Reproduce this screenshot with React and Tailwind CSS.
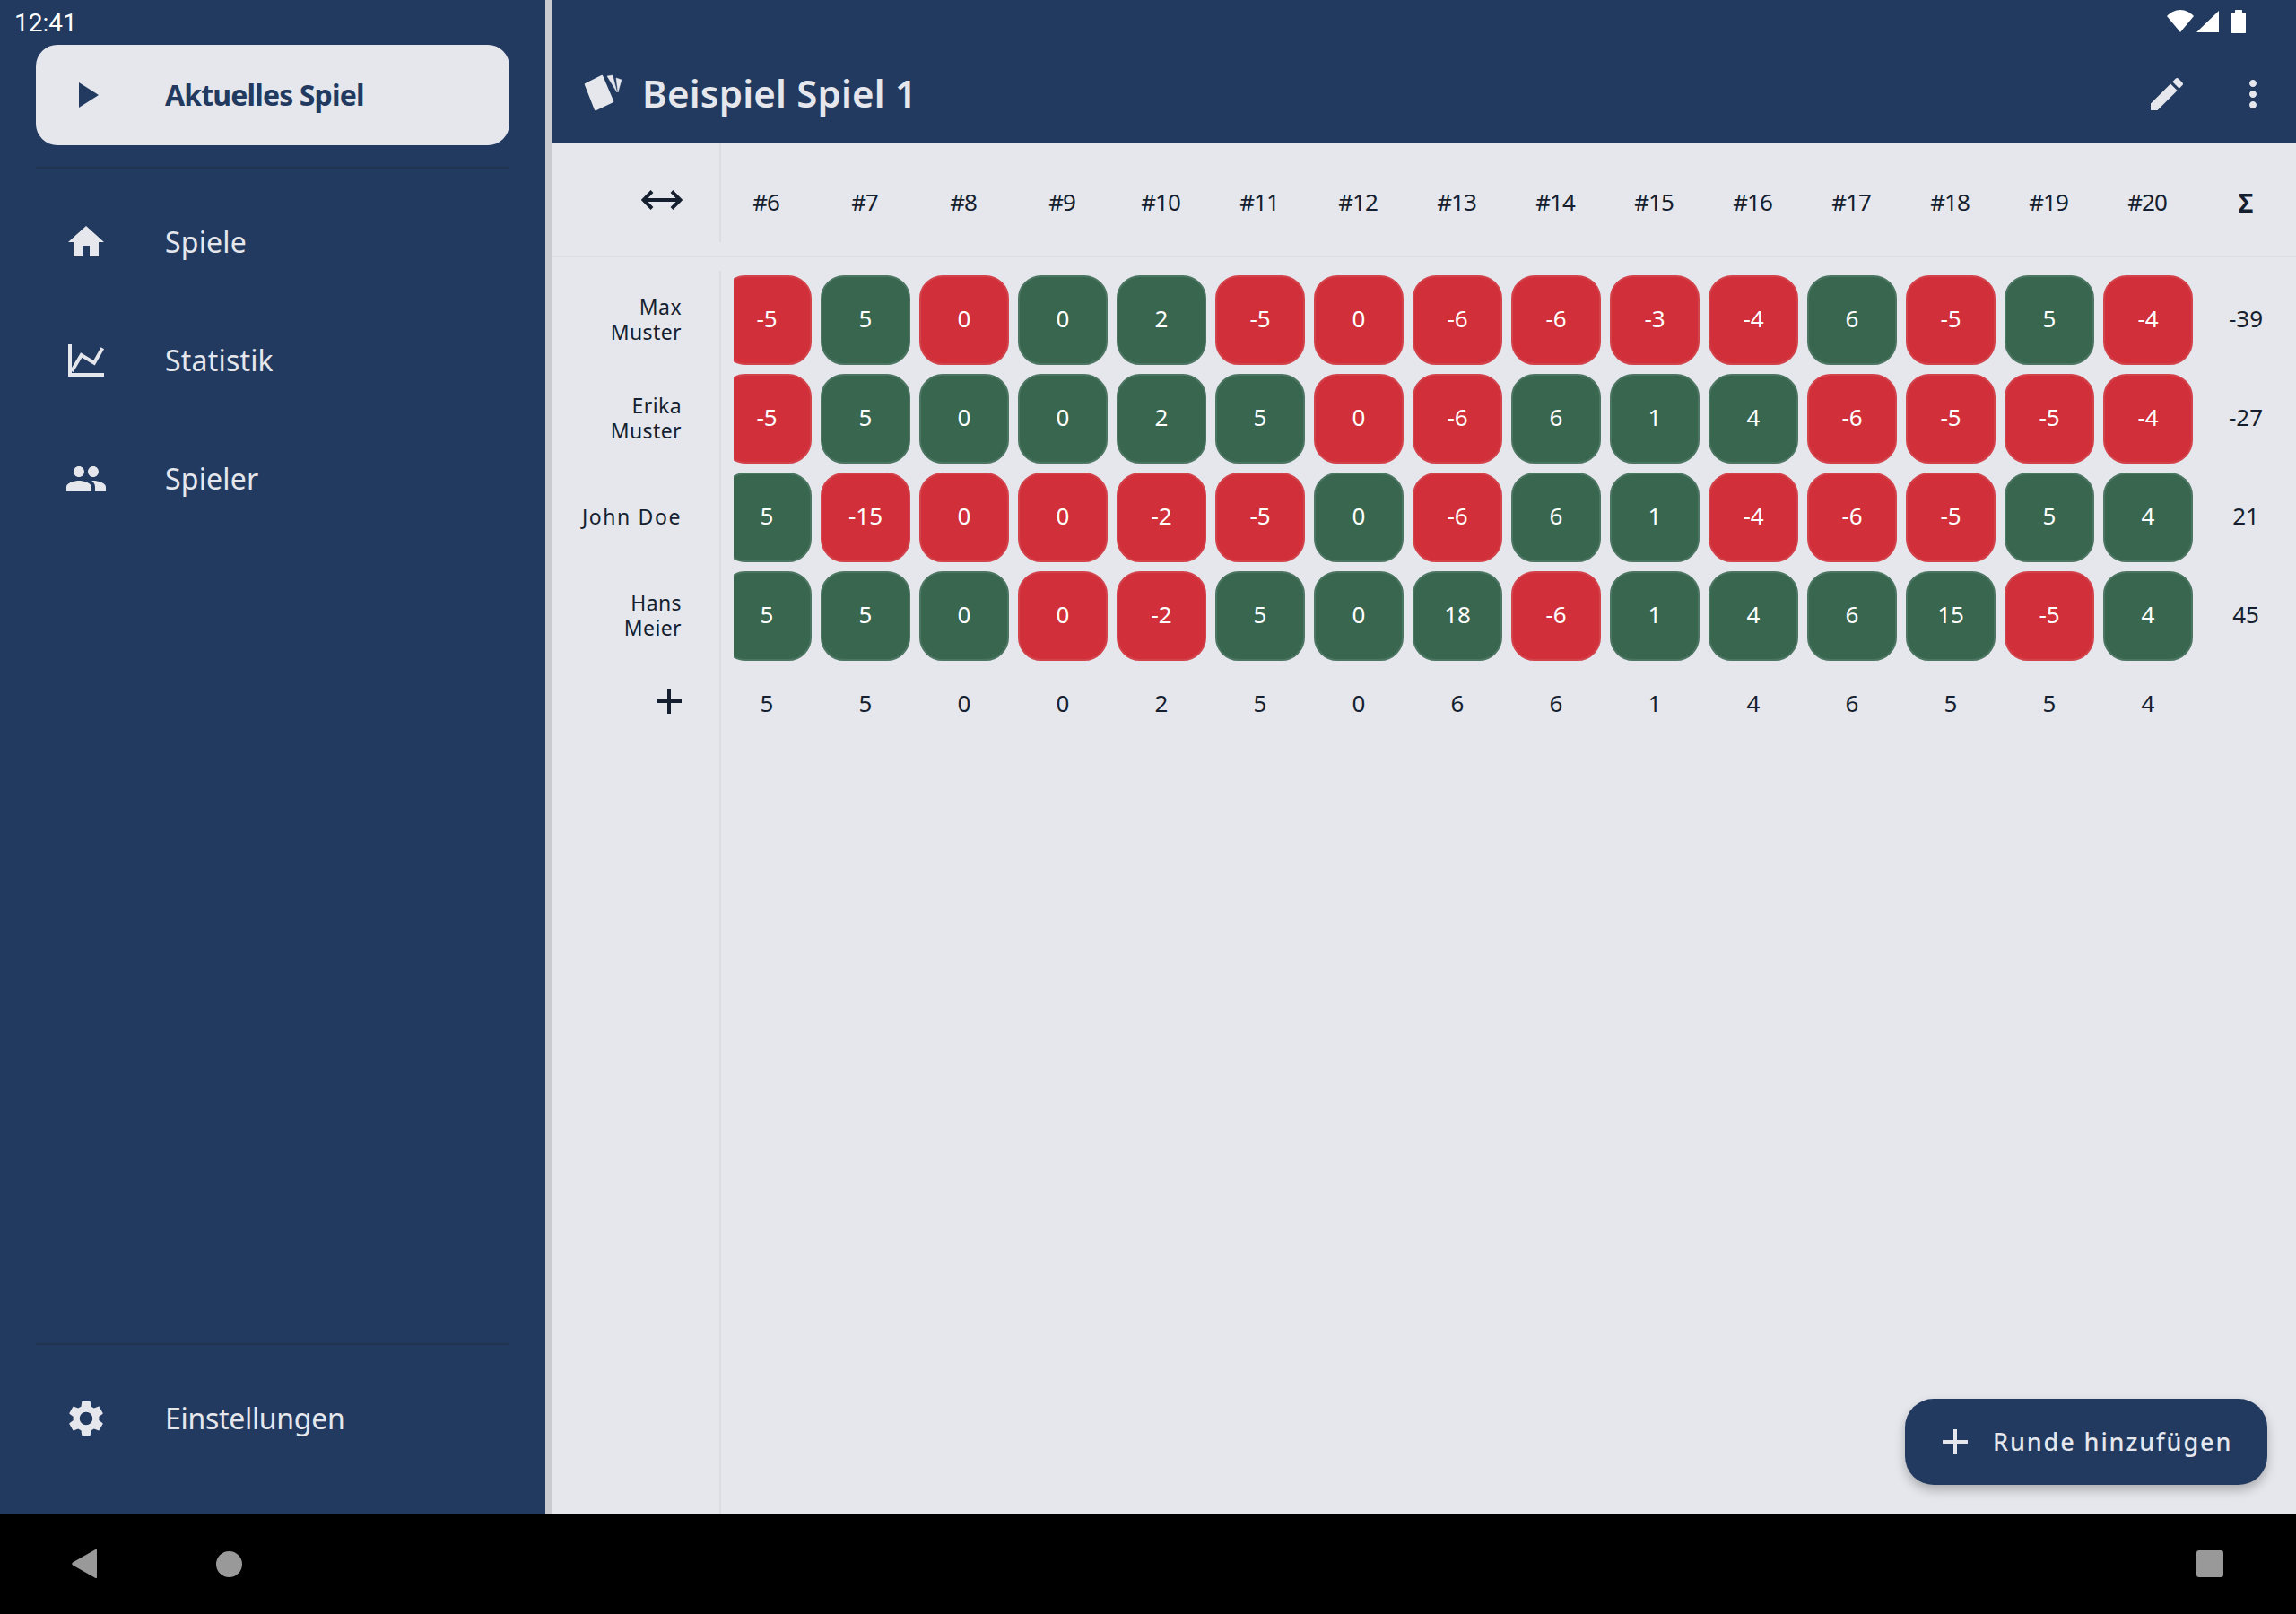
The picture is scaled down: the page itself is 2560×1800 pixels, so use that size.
const ROWS = [
  { name: ["Max", "Muster"], v: ["-5", "5", "0", "0", "2", "-5", "0", "-6", "-6", "-3", "-4", "6", "-5", "5", "-4"], c: "rgrggrrrrrrgrgr", sum: "-39", track: "tracking-[0.4px]" },
  { name: ["Erika", "Muster"], v: ["-5", "5", "0", "0", "2", "5", "0", "-6", "6", "1", "4", "-6", "-5", "-5", "-4"], c: "rgggggrrgggrrrr", sum: "-27", track: "tracking-[0.4px]" },
  { name: ["John Doe"], v: ["5", "-15", "0", "0", "-2", "-5", "0", "-6", "6", "1", "-4", "-6", "-5", "5", "4"], c: "grrrrrgrggrrrgg", sum: "21", track: "tracking-[1.6px]" },
  { name: ["Hans", "Meier"], v: ["5", "5", "0", "0", "-2", "5", "0", "18", "-6", "1", "4", "6", "15", "-5", "4"], c: "gggrrgggrggggrg", sum: "45", track: "tracking-[0.4px]" },
];
const HEAD = ["#6", "#7", "#8", "#9", "#10", "#11", "#12", "#13", "#14", "#15", "#16", "#17", "#18", "#19", "#20"];
const BOTTOM = ["5", "5", "0", "0", "2", "5", "0", "6", "6", "1", "4", "6", "5", "5", "4"];

function Icon({ d, className = "" }) {
  return (
    <svg viewBox="0 0 24 24" className={`h-[48px] w-[48px] shrink-0 fill-current ${className}`}>
      <path d={d} />
    </svg>
  );
}

const HOME = "M10 20v-6h4v6h5v-8h3L12 3 2 12h3v8z";
const PEOPLE = "M16 11c1.66 0 2.99-1.34 2.99-3S17.66 5 16 5c-1.66 0-3 1.34-3 3s1.34 3 3 3zm-8 0c1.66 0 2.99-1.34 2.99-3S9.66 5 8 5C6.34 5 5 6.34 5 8s1.34 3 3 3zm0 2c-2.33 0-7 1.17-7 3.5V19h14v-2.5c0-2.33-4.67-3.5-7-3.5zm8 0c-.29 0-.62.02-.97.05 1.16.84 1.97 1.97 1.97 3.45V19h6v-2.5c0-2.33-4.67-3.5-7-3.5z";
const GEAR = "M19.14 12.94c.04-.3.06-.61.06-.94 0-.32-.02-.64-.07-.94l2.03-1.58c.18-.14.23-.41.12-.61l-1.92-3.32c-.12-.22-.37-.29-.59-.22l-2.39.96c-.5-.38-1.03-.7-1.62-.94l-.36-2.54c-.04-.24-.24-.41-.48-.41h-3.84c-.24 0-.43.17-.47.41l-.36 2.54c-.59.24-1.13.57-1.62.94l-2.39-.96c-.22-.08-.47 0-.59.22L2.74 8.87c-.12.21-.08.47.12.61l2.03 1.58c-.05.3-.09.63-.09.94s.02.64.07.94l-2.03 1.58c-.18.14-.23.41-.12.61l1.92 3.32c.12.22.37.29.59.22l2.39-.96c.5.38 1.03.7 1.62.94l.36 2.54c.05.24.24.41.48.41h3.84c.24 0 .44-.17.47-.41l.36-2.54c.59-.24 1.13-.56 1.62-.94l2.39.96c.22.08.47 0 .59-.22l1.92-3.32c.12-.22.07-.47-.12-.61l-2.01-1.58zM12 15.6c-1.98 0-3.6-1.62-3.6-3.6s1.62-3.6 3.6-3.6 3.6 1.62 3.6 3.6-1.62 3.6-3.6 3.6z";
const PENCIL = "M3 17.25V21h3.75L17.81 9.94l-3.75-3.75L3 17.25zM20.71 7.04c.39-.39.39-1.02 0-1.41l-2.34-2.34c-.39-.39-1.02-.39-1.41 0l-1.83 1.83 3.75 3.75 1.83-1.83z";
const DOTS = "M12 8c1.1 0 2-.9 2-2s-.9-2-2-2-2 .9-2 2 .9 2 2 2zm0 2c-1.1 0-2 .9-2 2s.9 2 2 2 2-.9 2-2-.9-2-2-2zm0 6c-1.1 0-2 .9-2 2s.9 2 2 2 2-.9 2-2-.9-2-2-2z";

function ChartIcon() {
  return (
    <svg viewBox="0 0 48 48" className="h-[48px] w-[48px] shrink-0 fill-none stroke-current" strokeWidth="4">
      <path d="M6 6v34h38" />
      <path d="M8 36 18.7 18l14.3 8.7 9.3-16.4" />
    </svg>
  );
}

function NavItem({ icon, label, track = "tracking-[0.2px]" }) {
  return (
    <div className="flex h-[132px] items-center pl-[72px] text-[#e5e7ec]">
      {icon}
      <span className={`ml-[64px] text-[32px] ${track}`}>{label}</span>
    </div>
  );
}

function Cell({ value, kind, first }) {
  return (
    <div
      className={`flex h-[100px] w-[100px] shrink-0 items-center justify-center rounded-[26px] border-2 pb-[3px] text-[26px] text-white ${
        kind === "r" ? "border-[#d3434c] bg-[#d12f39]" : "border-[#4c7562] bg-[#38664f]"
      } ${first ? "ml-[-13px]" : "ml-[10px]"}`}
    >
      {value}
    </div>
  );
}

export default function App() {
  return (
    <div className="relative flex h-[1800px] w-[2560px] flex-col overflow-hidden font-['Noto_Sans',sans-serif] text-[#161f30]">
      <div className="flex h-[1688px]">
        <aside className="flex w-[608px] shrink-0 flex-col bg-[#223a60]">
          <div className="flex h-[50px] items-center pl-[16px] pt-[1px] font-['Roboto',sans-serif] text-[28px] text-white">12:41</div>
          <div className="mx-[40px] flex h-[112px] items-center rounded-[24px] bg-[#e5e7ec] pl-[32px] text-[#223a60]">
            <Icon d="M8 5v14l11-7z" />
            <span className="ml-[64px] pb-[1px] text-[32px] font-bold tracking-[-0.85px]">Aktuelles Spiel</span>
          </div>
          <div className="mx-[40px] mt-[24px] h-[2px] bg-[#20344f]" />
          <div className="mt-[16px]">
            <NavItem icon={<Icon d={HOME} />} label="Spiele" />
            <NavItem icon={<ChartIcon />} label="Statistik" />
            <NavItem icon={<Icon d={PEOPLE} />} label="Spieler" />
          </div>
          <div className="mx-[40px] mt-auto h-[2px] bg-[#20344f]" />
          <div className="mb-[40px] mt-[16px]">
            <NavItem icon={<Icon d={GEAR} />} label="Einstellungen" track="tracking-[-0.3px]" />
          </div>
        </aside>
        <div className="w-[8px] shrink-0 bg-[#c9cbd0]" />
        <main className="relative flex min-w-0 flex-1 flex-col bg-[#e5e7ec]">
          <header className="relative h-[160px] shrink-0 bg-[#223a60] text-[#e5e7ec]">
            <div className="flex h-[50px] items-start justify-end pr-[52px] pt-[11px] text-white">
              <svg viewBox="0 0 92 26" className="h-[26px] w-[92px] fill-current">
                <path d="M0 7C4 3 9 0 15 0s11 3 15 7L15 25z" />
                <path d="M33 25 58 1v24z" />
                <path d="M73 3h3V1c0-.6.4-1 1-1h6c.6 0 1 .4 1 1v2h3c.6 0 1 .4 1 1v21c0 .6-.4 1-1 1H73c-.6 0-1-.4-1-1V4c0-.6.4-1 1-1z" />
              </svg>
            </div>
            <div className="flex h-[110px] items-center pl-[34px] pr-[24px]">
              <svg viewBox="0 0 44 42" className="mb-[4px] h-[42px] w-[44px] shrink-0 fill-current stroke-current" strokeLinejoin="round">
                <path d="M3 12 21 3l12 28-19 9z" strokeWidth="2.5" />
                <path d="M27 3 33 2 38 21z" strokeWidth="0.5" />
                <path d="M37 5 43 7 39 21z" strokeWidth="0.5" />
              </svg>
              <h1 className="mb-[2px] ml-[22px] text-[42px] font-semibold leading-none tracking-[0.2px]">Beispiel Spiel 1</h1>
              <div className="ml-auto flex items-center gap-[48px]">
                <Icon d={PENCIL} />
                <Icon d={DOTS} />
              </div>
            </div>
          </header>

          <div className="flex h-[127px] shrink-0 border-b-2 border-[#dbdde2]">
            <div className="flex h-[110px] w-[188px] shrink-0 items-center border-r-2 border-[#dbdde2] pl-[99px] pt-[15px]">
              <svg viewBox="0 0 46 28" className="h-[28px] w-[46px] fill-none stroke-[#161f30]" strokeWidth="4">
                <path d="M3 14h40M12 4.5 2.5 14l9.5 9.5M34 4.5l9.5 9.5-9.5 9.5" />
              </svg>
            </div>
            <div className="ml-[-5px] flex h-[125px] items-center pt-[6px]">
              {HEAD.map((h) => (
                <div key={h} className="flex w-[110px] shrink-0 justify-center text-[26px] tracking-[-1px]">{h}</div>
              ))}
              <div className="ml-[6px] flex w-[98px] shrink-0 justify-center text-[28px] font-bold">Σ</div>
            </div>
          </div>

          <div className="flex min-h-0 flex-1 pt-[15px]">
            <div className="flex w-[188px] shrink-0 flex-col border-r-2 border-[#dbdde2] pr-[42px] pt-[5px]">
              {ROWS.map((r) => (
                <div key={r.name[0]} className={`mb-[10px] flex h-[100px] flex-col items-end justify-center pb-[2px] text-right text-[23px] leading-[28px] ${r.track}`}>
                  {r.name.map((n) => <span key={n}>{n}</span>)}
                </div>
              ))}
              <div className="flex h-[70px] items-center justify-end">
                <svg viewBox="0 0 28 28" className="h-[28px] w-[28px] fill-none stroke-[#161f30]" strokeWidth="4">
                  <path d="M14 0v28M0 14h28" />
                </svg>
              </div>
            </div>
            <div className="ml-[14px] w-[1637px] shrink-0 overflow-hidden pt-[5px]">
              {ROWS.map((r) => (
                <div key={r.name[0]} className="mb-[10px] flex">
                  {r.v.map((v, i) => <Cell key={i} value={v} kind={r.c[i]} first={i === 0} />)}
                </div>
              ))}
              <div className="flex h-[78px] items-center pb-[3px]">
                {BOTTOM.map((v, i) => (
                  <div key={i} className={`flex w-[100px] shrink-0 justify-center text-[26px] ${i === 0 ? "ml-[-13px]" : "ml-[10px]"}`}>{v}</div>
                ))}
              </div>
            </div>
            <div className="w-[98px] shrink-0 pt-[5px]">
              {ROWS.map((r) => (
                <div key={r.name[0]} className="mb-[10px] flex h-[100px] items-center justify-center pb-[3px] text-[26px]">{r.sum}</div>
              ))}
            </div>
          </div>

          <button className="absolute bottom-[32px] right-[32px] flex h-[96px] w-[404px] items-center rounded-[32px] bg-[#223a60] pl-[42px] text-[#e5e7ec] shadow-[0_6px_12px_rgba(0,0,0,0.25)]">
            <svg viewBox="0 0 28 28" className="h-[28px] w-[28px] shrink-0 fill-none stroke-current" strokeWidth="4">
              <path d="M14 0v28M0 14h28" />
            </svg>
            <span className="ml-[28px] text-[27px] font-medium tracking-[1.9px]">Runde hinzufügen</span>
          </button>
        </main>
      </div>
      <nav className="relative flex h-[112px] shrink-0 items-center bg-black pl-[80px] pr-[81px]">
        <svg viewBox="0 0 28 32" className="h-[32px] w-[28px] fill-[#999999]">
          <path d="M27 0c.6 0 1 .4 1 1v30c0 .8-.8 1.3-1.5.9L1 17.5c-1-.6-1-2.4 0-3L26 .3c.3-.2.6-.3 1-.3z" />
        </svg>
        <div className="ml-[133px] h-[29px] w-[29px] rounded-full bg-[#999999]" />
        <div className="ml-auto h-[30px] w-[30px] rounded-[3px] bg-[#999999]" />
      </nav>
    </div>
  );
}
